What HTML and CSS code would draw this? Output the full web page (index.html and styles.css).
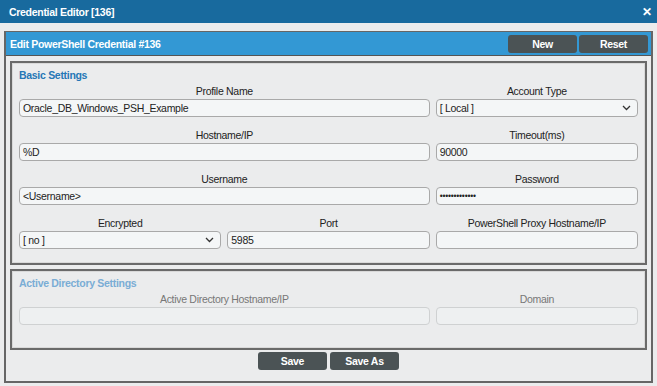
FILE: index.html
```html
<!DOCTYPE html>
<html>
<head>
<meta charset="utf-8">
<link rel="stylesheet" href="styles.css">
</head>
<body>
<div class="titlebar">
  <span class="title">Credential Editor [136]</span>
  <span class="close">✕</span>
</div>
<div class="panel">
  <div class="panel-head">
    <span class="panel-title">Edit PowerShell Credential #136</span>
    <div class="head-btns">
      <span class="btn">New</span>
      <span class="btn">Reset</span>
    </div>
  </div>
  <div class="box">
    <div class="box-title">Basic Settings</div>
    <div class="grid">
      <div class="field span2">
        <div class="label">Profile Name</div>
        <div class="input">Oracle_DB_Windows_PSH_Example</div>
      </div>
      <div class="field">
        <div class="label">Account Type</div>
        <div class="input select">[ Local ]<svg class="chev" width="9" height="6" viewBox="0 0 9 6"><path d="M1 1 L4.5 4.5 L8 1" fill="none" stroke="#333" stroke-width="1.3"/></svg></div>
      </div>
      <div class="field span2">
        <div class="label">Hostname/IP</div>
        <div class="input">%D</div>
      </div>
      <div class="field">
        <div class="label">Timeout(ms)</div>
        <div class="input">90000</div>
      </div>
      <div class="field span2">
        <div class="label">Username</div>
        <div class="input">&lt;Username&gt;</div>
      </div>
      <div class="field">
        <div class="label">Password</div>
        <div class="input pw">•••••••••••••</div>
      </div>
      <div class="field">
        <div class="label">Encrypted</div>
        <div class="input select">[ no ]<svg class="chev" width="9" height="6" viewBox="0 0 9 6"><path d="M1 1 L4.5 4.5 L8 1" fill="none" stroke="#333" stroke-width="1.3"/></svg></div>
      </div>
      <div class="field">
        <div class="label">Port</div>
        <div class="input">5985</div>
      </div>
      <div class="field">
        <div class="label">PowerShell Proxy Hostname/IP</div>
        <div class="input"></div>
      </div>
    </div>
  </div>
  <div class="box disabled">
    <div class="box-title">Active Directory Settings</div>
    <div class="grid">
      <div class="field span2">
        <div class="label">Active Directory Hostname/IP</div>
        <div class="input"></div>
      </div>
      <div class="field">
        <div class="label">Domain</div>
        <div class="input"></div>
      </div>
    </div>
  </div>
  <div class="foot">
    <span class="btn">Save</span>
    <span class="btn">Save As</span>
  </div>
</div>
</body>
</html>
```
FILE: styles.css
```css
* { box-sizing: border-box; }
html, body {
  margin: 0;
  padding: 0;
  background: #ebeced;
  font-family: "Liberation Sans", Arial, sans-serif;
  font-size: 10.5px;
  letter-spacing: -0.3px;
  color: #222;
}
.titlebar {
  height: 23px;
  background: #186a9e;
  color: #fff;
  display: flex;
  align-items: center;
  justify-content: space-between;
  padding: 0 5px 0 9px;
}
.title {
  font-weight: bold;
  font-size: 10.5px;
}
.close {
  font-weight: bold;
  font-size: 12px;
}
.panel {
  margin: 8px 0 0 4px;
  width: 649px;
  height: 352px;
  border: 2px solid #666;
  border-top-width: 1px;
  display: flex;
  flex-direction: column;
}
.panel-head {
  height: 24px;
  background: #3398d4;
  display: flex;
  align-items: center;
  justify-content: space-between;
  padding: 0 3px 0 4px;
  border-bottom: 1px solid #555;
}
.panel-title {
  color: #fff;
  font-weight: bold;
}
.head-btns {
  display: flex;
  gap: 2px;
}
.btn {
  display: inline-flex;
  align-items: center;
  justify-content: center;
  width: 69px;
  height: 18px;
  background: #4b5355;
  color: #fff;
  border-radius: 3px;
  font-weight: bold;
}
.box {
  margin: 5px 4px 0 4px;
  border: 2px solid #6a6a6a;
  box-shadow: inset 0 0 0 1px #d9d9d9;
  padding: 5px 7px 14px 7px;
}
.box-title {
  color: #2677b6;
  font-weight: bold;
  line-height: 14px;
}
.grid {
  display: grid;
  grid-template-columns: 1fr 1fr 1fr;
  column-gap: 6px;
  row-gap: 11px;
  margin-top: 2px;
}
.span2 { grid-column: span 2; }
.field {
  display: flex;
  flex-direction: column;
}
.label {
  text-align: center;
  line-height: 14px;
  margin-bottom: 1px;
}
.input {
  height: 18px;
  background: #f4f6f7;
  border: 1px solid #a9a9a9;
  border-radius: 4px;
  padding: 0 3px;
  display: flex;
  align-items: center;
  justify-content: space-between;
  line-height: 16px;
}
.chev { margin-right: 3px; }
.pw { font-size: 8.5px; letter-spacing: -0.2px; }
.disabled .box-title { color: #7aadd5; }
.disabled .label { color: #777; }
.disabled .input {
  background: #eef0f1;
  border-color: #cfd1d2;
}
.disabled { margin-top: 4px; padding-bottom: 23px; }
.foot {
  display: flex;
  justify-content: center;
  gap: 3px;
  margin-top: 2px;
}
```
